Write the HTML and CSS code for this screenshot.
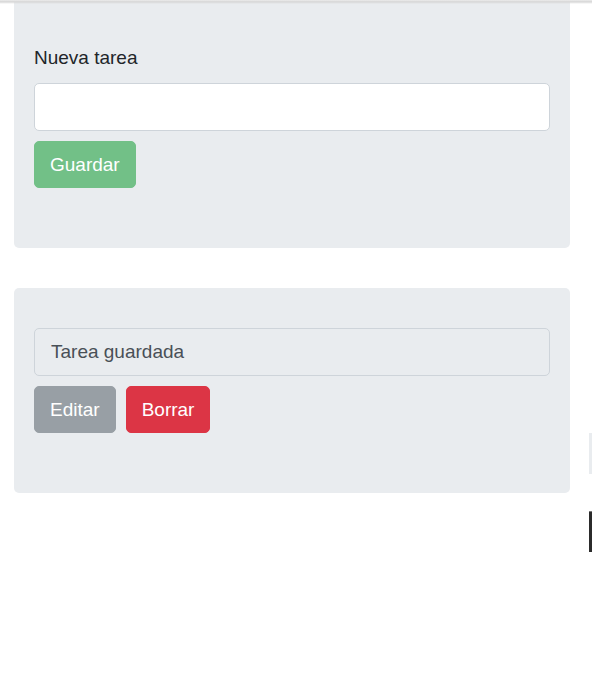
FILE: index.html
```html
<!DOCTYPE html>
<html lang="es">
<head>
<meta charset="utf-8">
<title>Tareas</title>
<link rel="stylesheet" href="styles.css">
</head>
<body>
<div class="top-shadow"></div>
<main class="page">
  <section class="card card-new">
    <label class="label" for="nueva">Nueva tarea</label>
    <input class="field" id="nueva" type="text">
    <div class="actions">
      <button class="btn btn-success" disabled>Guardar</button>
    </div>
  </section>
  <section class="card card-saved">
    <input class="field field-readonly" type="text" value="Tarea guardada" readonly>
    <div class="actions">
      <button class="btn btn-secondary" disabled>Editar</button>
      <button class="btn btn-danger">Borrar</button>
    </div>
  </section>
</main>
<div class="edge edge-light"></div>
<div class="edge edge-dark"></div>
</body>
</html>
```

FILE: styles.css
```css
* { box-sizing: border-box; }

html, body {
  margin: 0;
  padding: 0;
  background: #ffffff;
  font-family: "Liberation Sans", Arial, sans-serif;
  color: #212529;
}

.top-shadow {
  position: absolute;
  top: 0;
  left: 0;
  right: 0;
  height: 4px;
  background: linear-gradient(#ededed 0%, #d6d6d6 45%, rgba(214,214,214,0) 100%);
  z-index: 2;
}

.page {
  width: 556px;
  margin-left: 14px;
  display: flex;
  flex-direction: column;
  gap: 40px;
}

.card {
  background: #e9ecef;
  border-radius: 5px;
  padding: 40px 20px 60px;
  display: flex;
  flex-direction: column;
  gap: 10px;
}

.card-new {
  padding-top: 44px;
  border-top-left-radius: 0;
  border-top-right-radius: 0;
}

.label {
  font-size: 19px;
  line-height: 28px;
  margin-bottom: 1px;
  color: #212529;
}

.field {
  display: block;
  width: 100%;
  height: 48px;
  padding: 0 16px;
  font-family: inherit;
  font-size: 19px;
  color: #495057;
  background: #ffffff;
  border: 1px solid #ced4da;
  border-radius: 5px;
  outline: none;
}

.field-readonly {
  background: #e9ecef;
}

.actions {
  display: flex;
  gap: 10px;
}

.btn {
  height: 47px;
  padding: 0 15px;
  font-family: inherit;
  font-size: 19px;
  line-height: 1;
  color: #ffffff;
  border: 1px solid transparent;
  border-radius: 5px;
  cursor: pointer;
}

.btn-success { background: #72c087; border-color: #72c087; }
.btn-secondary { background: #989fa5; border-color: #989fa5; }
.btn-danger { background: #dc3545; border-color: #dc3545; }

.edge {
  position: absolute;
  left: 589px;
  width: 3px;
}

.edge-light {
  top: 433px;
  height: 41px;
  background: #e9ecef;
}

.edge-dark {
  top: 511px;
  height: 41px;
  background: #2b2b2b;
  border-top: 1px solid #777;
}
```
